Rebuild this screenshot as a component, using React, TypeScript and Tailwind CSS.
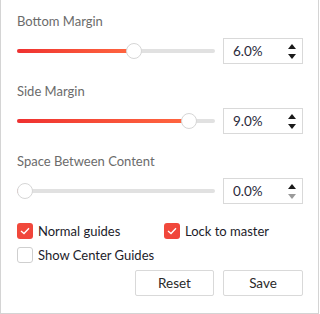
import React from "react"

const font = { fontFamily: 'Lato, "Noto Sans", sans-serif' }

const settings = [
  { label: "Bottom Margin", value: 6.0 },
  { label: "Side Margin", value: 9.0 },
  { label: "Space Between Content", value: 0.0 },
]

const MAX = 10

function Slider({ value }: { value: number }) {
  const pct = value / MAX
  return (
    <div className="relative h-4 flex-1">
      <div className="absolute left-0 right-0 top-[6px] h-[4px] rounded-full bg-[#e1e1e1]" />
      <div
        className="absolute left-0 top-[6px] h-[4px] rounded-full bg-gradient-to-r from-[#ef3030] to-[#ff6640]"
        style={{ width: `calc(${pct} * (100% - 16px) + 8px)` }}
      />
      <div
        className="absolute top-0 h-4 w-4 rounded-full border border-[#d6d6d6] bg-white"
        style={{ left: `calc(${pct} * (100% - 16px))` }}
      />
    </div>
  )
}

function Spinner({ atMin }: { atMin: boolean }) {
  return (
    <div className="flex flex-col items-center gap-[5px]">
      <svg width="8" height="5" viewBox="0 0 8 5">
        <path d="M4 0 L8 5 L0 5 Z" fill="#1a1a1a" />
      </svg>
      <svg width="8" height="5" viewBox="0 0 8 5">
        <path d="M0 0 L8 0 L4 5 Z" fill={atMin ? "#9a9a9a" : "#1a1a1a"} />
      </svg>
    </div>
  )
}

function Check({ checked, label }: { checked: boolean; label: string }) {
  return (
    <label className="flex items-center gap-[5px]">
      {checked ? (
        <span className="flex h-4 w-4 items-center justify-center rounded-[3px] bg-gradient-to-br from-[#f14a3c] to-[#f0433a]">
          <svg width="10" height="8" viewBox="0 0 10 8">
            <path d="M1 4 L4 6.5 L9 1.2" fill="none" stroke="white" strokeWidth="1.3" />
          </svg>
        </span>
      ) : (
        <span className="h-4 w-4 rounded-[3px] border border-[#cfcfcf] bg-white" />
      )}
      <span className="text-[13px] leading-[18px] text-[#1c1c2a]">{label}</span>
    </label>
  )
}

export default function App() {
  return (
    <div
      className="flex h-[314px] w-[319px] flex-col border-x border-b border-[#d4d4d4] bg-white pl-4 pr-[15px] pt-[12px]"
      style={font}
    >
      {settings.map((s, i) => (
        <div key={i} className="mb-[18px] flex flex-col gap-[8px]">
          <div className="text-[13px] leading-[18px] text-[#6b6b6b]">{s.label}</div>
          <div className="flex items-center gap-2">
            <Slider value={s.value} />
            <div className="flex h-[26px] w-20 items-center justify-between border border-[#d9d9d9] pl-[9px] pr-[6px]">
              <span className="text-[13.5px] text-[#2a2a3a]">{s.value.toFixed(1)}%</span>
              <Spinner atMin={s.value === 0} />
            </div>
          </div>
        </div>
      ))}
      <div className="flex flex-col gap-[6px]">
        <div className="flex">
          <div className="w-[147px]">
            <Check checked label="Normal guides" />
          </div>
          <Check checked label="Lock to master" />
        </div>
        <Check checked={false} label="Show Center Guides" />
      </div>
      <div className="mt-[6px] flex justify-end gap-[9px]">
        <button className="h-[26px] w-[79px] rounded-[2px] border border-[#d9d9d9] text-[13.5px] text-[#2a2a2a]">
          Reset
        </button>
        <button className="h-[26px] w-20 rounded-[2px] border border-[#d9d9d9] text-[13.5px] text-[#2a2a2a]">
          Save
        </button>
      </div>
    </div>
  )
}
